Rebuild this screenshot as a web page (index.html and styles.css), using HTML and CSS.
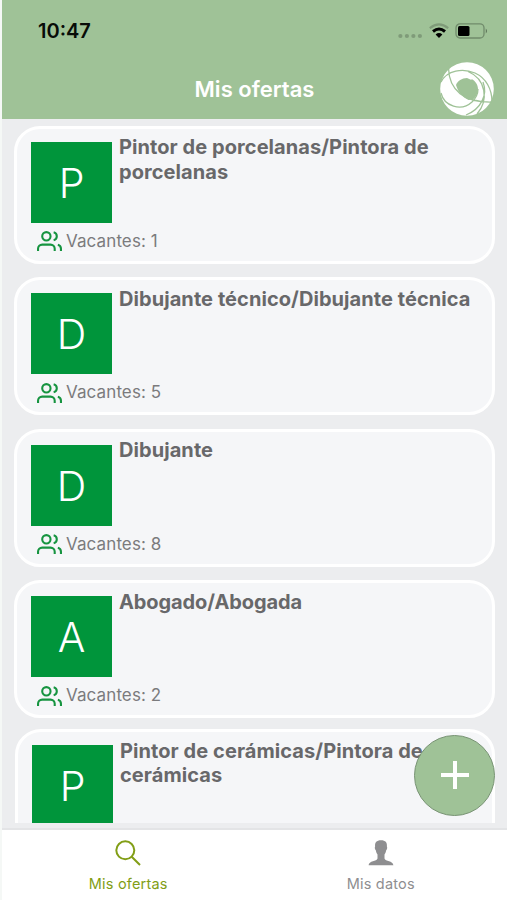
FILE: index.html
```html
<!DOCTYPE html>
<html lang="es">
<head>
<meta charset="utf-8">
<title>Mis ofertas</title>
<link rel="stylesheet" href="styles.css">
</head>
<body>
<svg class="defs" width="0" height="0">
  <symbol id="users" viewBox="0 0 24 24">
    <path d="M17 21v-2a4 4 0 0 0-4-4H5a4 4 0 0 0-4 4v2"/><circle cx="9" cy="7" r="4"/><path d="M23 21v-2a4 4 0 0 0-3-3.87M16 3.13a4 4 0 0 1 0 7.75"/>
  </symbol>
</svg>
<div class="app">
  <header class="top">
    <div class="status">
      <span class="clock">10:47</span>
      <div class="signals">
        <svg width="24" height="6" viewBox="0 0 24 6" class="dots"><circle cx="2.4" cy="3" r="2.1"/><circle cx="8.9" cy="3" r="2.1"/><circle cx="15.4" cy="3" r="2.1"/><circle cx="21.9" cy="3" r="2.1"/></svg>
        <svg width="20" height="16" viewBox="0 0 20 16" class="wifi"><path class="faint" d="M.8 5.200Q10-2.400 19.200 5.200"/><path d="M4 8.500Q10 3.500 16 8.500"/><path class="tip" d="M6.600 11.400Q10 8.600 13.400 11.400L10 15Z"/></svg>
        <svg width="33" height="16" viewBox="0 0 33 16" class="battery"><rect x="1" y=".8" width="28" height="14.2" rx="4"/><rect class="level" x="3" y="3" width="11.5" height="10" rx="1.500"/><path class="cap" d="M30.8 5.500Q33 8 30.8 10.500Z"/></svg>
      </div>
    </div>
    <div class="bar">
      <h1>Mis ofertas</h1>
      <svg class="logo" width="54" height="54" viewBox="0 0 54 54">
        <circle class="disc" cx="27" cy="27" r="26.8"/>
        <path class="hole" d="M16 23C17.500 19 22 16 27 16L31.500 18V17C35.500 19 38 23 38 27C38 31.500 36 35 33 37.500L28.500 38C22.500 35 18 30 16 23Z"/>
        <path d="M8.500 6C9 28 24 41 53 40M1 20C7 8 23 6 35 11C46 16 52 27 52 40M1 31C4 44 21 50 32 40C36 36 38 32 38 27M28 9.500C46 17 49 38 37 52M43 20C48 33 41 47 26 53"/>
      </svg>
    </div>
  </header>
  <main class="list">
    <article class="card"><div class="row"><div class="avatar">P</div><h2>Pintor de porcelanas/Pintora de<br>porcelanas</h2></div><p class="vac"><svg><use href="#users"/></svg><span>Vacantes: 1</span></p></article>
    <article class="card"><div class="row"><div class="avatar">D</div><h2>Dibujante técnico/Dibujante técnica</h2></div><p class="vac"><svg><use href="#users"/></svg><span>Vacantes: 5</span></p></article>
    <article class="card"><div class="row"><div class="avatar">D</div><h2>Dibujante</h2></div><p class="vac"><svg><use href="#users"/></svg><span>Vacantes: 8</span></p></article>
    <article class="card"><div class="row"><div class="avatar">A</div><h2 class="tight">Abogado/Abogada</h2></div><p class="vac"><svg><use href="#users"/></svg><span>Vacantes: 2</span></p></article>
    <article class="card last"><div class="row"><div class="avatar">P</div><h2>Pintor de cerámicas/Pintora de<br>cerámicas</h2></div></article>
  </main>
  <button class="fab" aria-label="Añadir"><svg width="28" height="28" viewBox="0 0 28 28"><path d="M14 0v28M0 14h28"/></svg></button>
  <nav class="tabs">
    <a class="tab active"><svg width="26" height="26" viewBox="0 0 26 26"><circle cx="10.3" cy="10.3" r="9"/><path d="M16.700 16.700L25 25"/></svg><span>Mis ofertas</span></a>
    <a class="tab"><svg width="26" height="26" viewBox="0 0 26 26"><path class="person" d="M13 .3C8.500.3 6.700 2.500 7.100 6.500C6.500 7 6.900 9.800 7.800 10.300C8.200 12.500 8.900 13.700 9.500 14.500V18.500C8.800 21.500.9 20.600.6 25.300H25.400C25.100 20.600 17.200 21.500 16.500 18.500V14.500C17.100 13.700 17.800 12.500 18.200 10.300C19.100 9.800 19.500 7 18.900 6.500C19.300 2.500 17.500.3 13 .3Z"/></svg><span>Mis datos</span></a>
  </nav>
</div>
</body>
</html>
```
FILE: styles.css
```css
* { box-sizing: border-box; margin: 0; padding: 0; }
body { font-family: Inter, "Liberation Sans", sans-serif; background: #f5f8f6; }
.defs { position: absolute; }
svg { display: block; flex: none; }
.app { position: relative; height: 900px; margin-left: 2px; display: flex; flex-direction: column; background: #ecedef; overflow: hidden; }
.top { height: 119px; flex: none; background: #9fc297; }
.status { height: 62px; display: flex; justify-content: space-between; padding: 0 18px 0 36px; align-items: center; }
.clock { font-size: 20px; font-weight: 600; color: #080c08; }
.signals { display: flex; align-items: center; }
.dots { margin: 10px 7px 0 0; fill: #7f9b79; }
.wifi { margin-right: 6px; fill: none; stroke: #000; stroke-width: 3; }
.wifi .faint { stroke: #7f9b79; stroke-width: 2.2; }
.wifi .tip { fill: #000; stroke: none; }
.battery { margin-right: 1px; fill: none; stroke: #708b6b; stroke-width: 1.3; }
.battery .level { fill: #000; stroke: none; }
.battery .cap { fill: #54694f; stroke: none; }
.bar { height: 54px; display: grid; grid-template-columns: 1fr auto 1fr; align-items: center; padding: 0 12px 0 12px; }
.bar h1 { grid-column: 2; font-size: 22px; font-weight: 600; color: #fff; }
.logo { justify-self: end; margin-right: 1px; fill: none; stroke: #9fc297; stroke-width: 1.3; }
.logo .disc { fill: #fff; stroke: none; }
.logo .hole { fill: #9fc297; stroke: none; }
.list { height: 704px; flex: none; overflow: hidden; padding: 6.5px 12px 0 12px; display: flex; flex-direction: column; gap: 13.5px; }
.card { width: 481px; height: 138px; flex: none; border: 3px solid #fff; border-radius: 26px; background: #f5f6f8; padding: 13px 13px 0 14px; }
.row { display: flex; height: 82px; }
.avatar { width: 81px; height: 81px; flex: none; background: #00953b; color: #fff; font: 350 41px/82px Inter, sans-serif; text-align: center; }
h2 { margin: -6.4px 0 0 7px; font-size: 20px; line-height: 24.5px; font-weight: 700; letter-spacing: .07px; color: #68686a; white-space: nowrap; }
h2.tight { letter-spacing: -.1px; }
.vac { display: flex; height: 34px; align-items: center; padding: 0 0 0 6px; gap: 4px; font-size: 17px; letter-spacing: .1px; color: #7b7b7d; }
.vac svg { width: 25px; height: 25px; fill: none; stroke: #169440; stroke-width: 2; margin-top: 2px; }
.last { margin-top: -2.5px; margin-left: 1px; width: 480px; }
.fab { position: absolute; left: 412px; top: 735px; width: 81px; height: 81px; border: 1px solid #789374; border-radius: 50%; background: #9fc297; display: flex; align-items: center; justify-content: center; }
.fab svg { stroke: #fff; stroke-width: 4; fill: none; margin-top: -1px; }
.tabs { margin-top: auto; height: 72px; border-top: 2px solid #e3e4e6; background: #fff; display: grid; grid-template-columns: 1fr 1fr; }
.tab { display: flex; flex-direction: column; align-items: center; padding-top: 10px; gap: 9px; font-size: 14.5px; letter-spacing: .2px; color: #8e8e90; line-height: 18px; }
.tab svg { fill: none; stroke: #829e16; stroke-width: 2; }
.tab .person { fill: #8e8e90; stroke: none; }
.active { color: #829e16; }
```
